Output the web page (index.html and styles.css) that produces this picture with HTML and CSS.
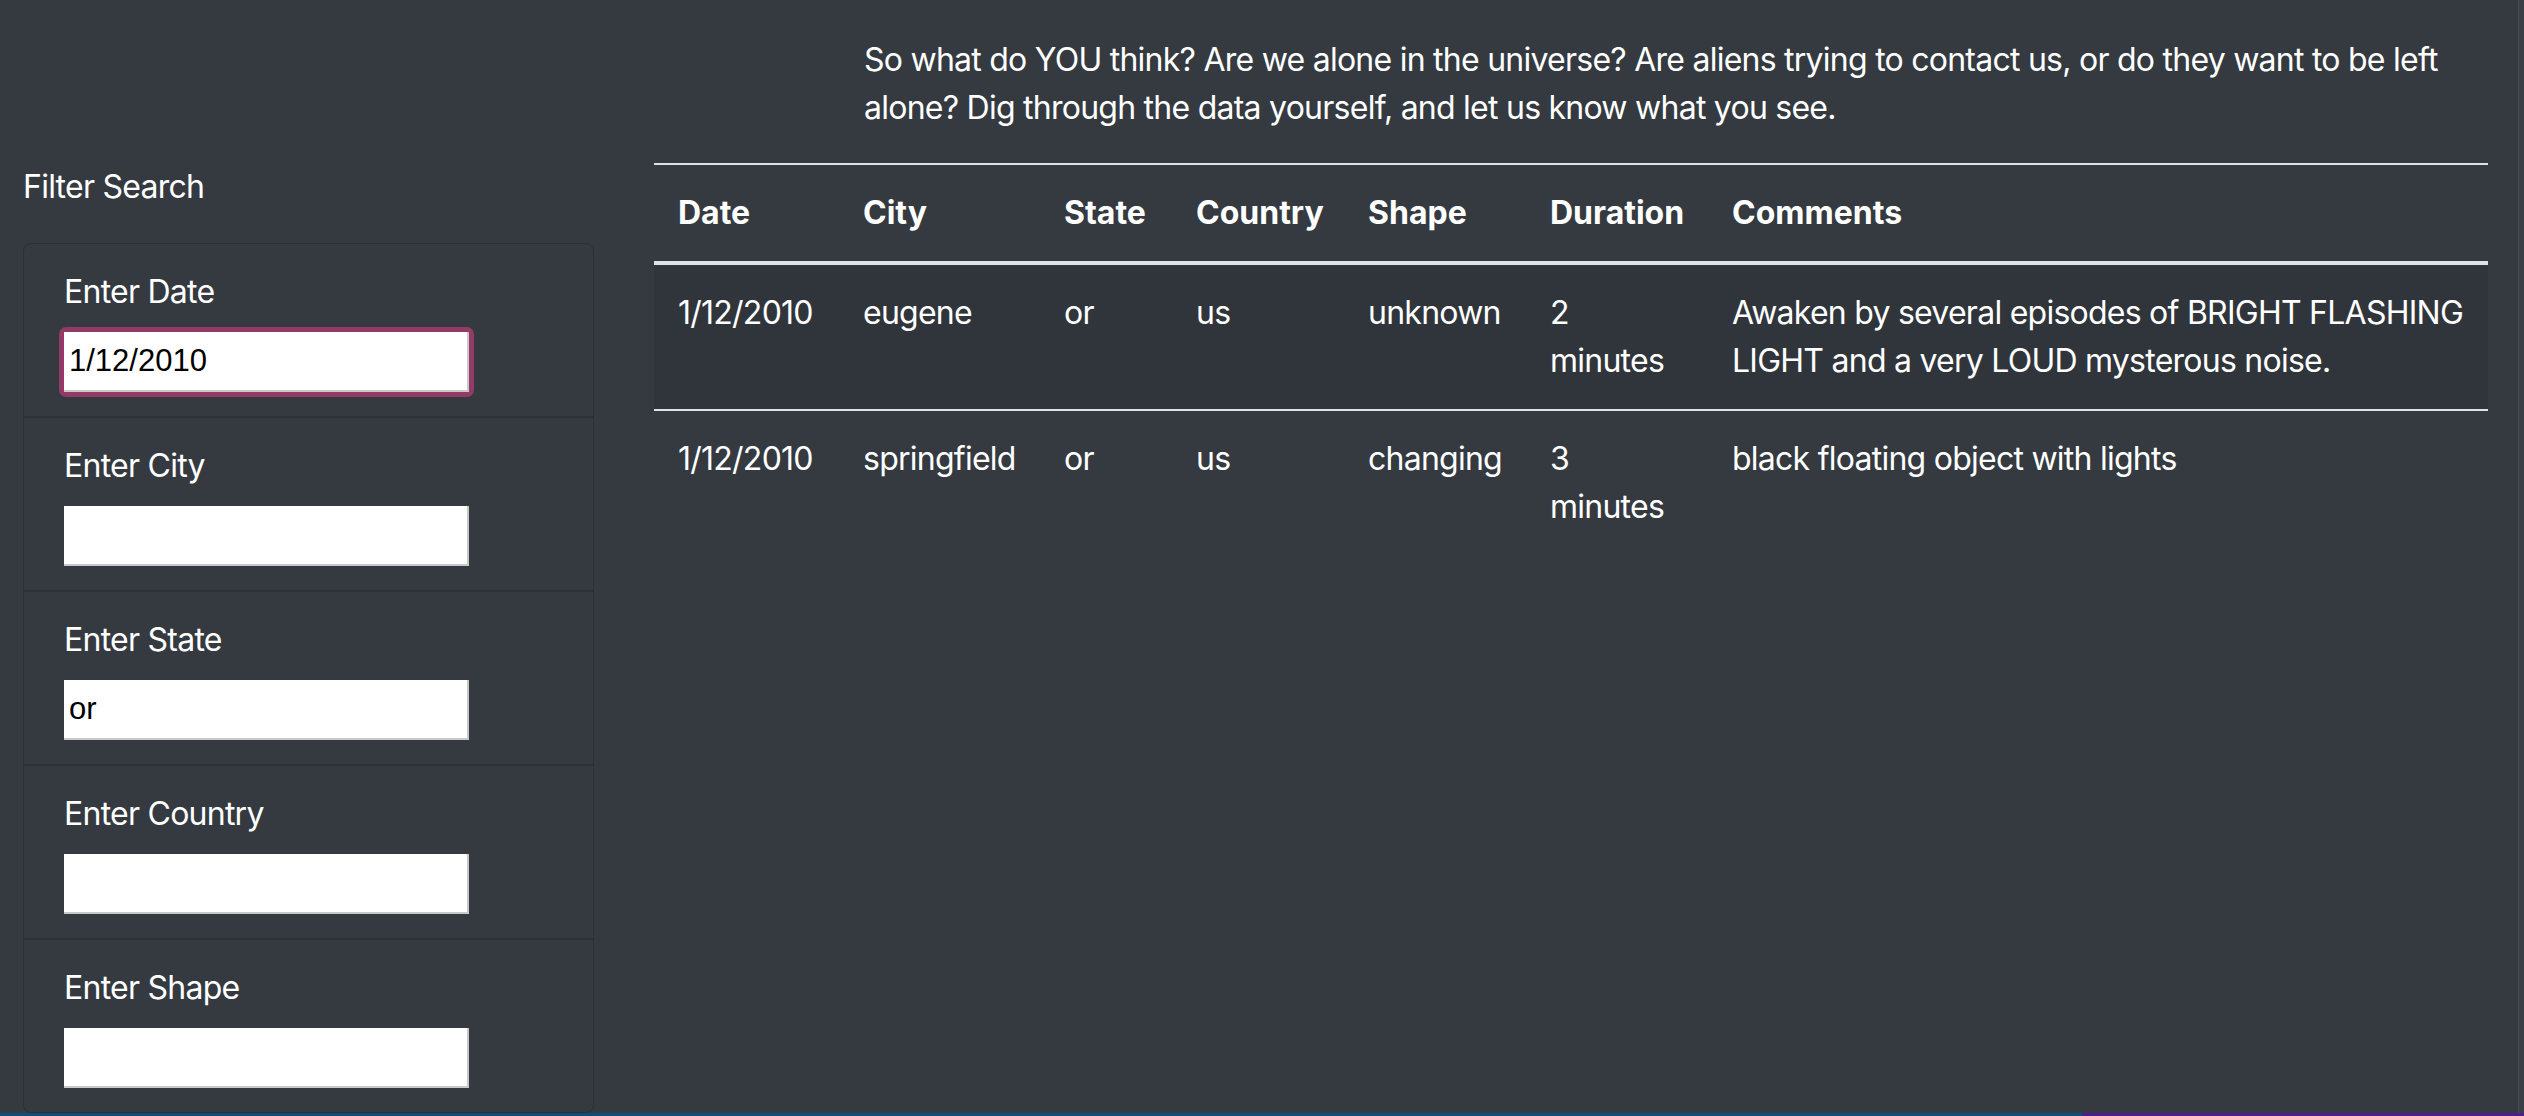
FILE: index.html
```html
<!DOCTYPE html>
<html lang="en">
<head>
<meta charset="utf-8">
<title>UFO Sightings</title>
<link rel="stylesheet" href="styles.css">
</head>
<body>
<div class="app">
  <div class="viewport">
    <div class="page">
      <aside class="sidebar">
        <div class="filter-title">Filter Search</div>
        <ul class="filters">
          <li class="filter">
            <label class="filter-label" for="datetime">Enter Date</label>
            <span class="focus-ring"><input class="filter-input" id="datetime" type="text" value="1/12/2010"></span>
          </li>
          <li class="filter">
            <label class="filter-label" for="city">Enter City</label>
            <input class="filter-input" id="city" type="text" value="">
          </li>
          <li class="filter">
            <label class="filter-label" for="state">Enter State</label>
            <input class="filter-input" id="state" type="text" value="or">
          </li>
          <li class="filter">
            <label class="filter-label" for="country">Enter Country</label>
            <input class="filter-input" id="country" type="text" value="">
          </li>
          <li class="filter">
            <label class="filter-label" for="shape">Enter Shape</label>
            <input class="filter-input" id="shape" type="text" value="">
          </li>
        </ul>
      </aside>
      <main class="content">
        <p class="intro">So what do YOU think? Are we alone in the universe? Are aliens trying to contact us, or do they want to be left alone? Dig through the data yourself, and let us know what you see.</p>
        <table class="ufo-table">
          <colgroup>
            <col class="c-date"><col class="c-city"><col class="c-state"><col class="c-country"><col class="c-shape"><col class="c-duration"><col class="c-comments">
          </colgroup>
          <thead>
            <tr><th>Date</th><th>City</th><th>State</th><th>Country</th><th>Shape</th><th>Duration</th><th>Comments</th></tr>
          </thead>
          <tbody>
            <tr class="striped"><td>1/12/2010</td><td>eugene</td><td>or</td><td>us</td><td>unknown</td><td>2 minutes</td><td>Awaken by several episodes of BRIGHT FLASHING LIGHT and a very LOUD mysterous noise.</td></tr>
            <tr><td>1/12/2010</td><td>springfield</td><td>or</td><td>us</td><td>changing</td><td>3 minutes</td><td>black floating object with lights</td></tr>
          </tbody>
        </table>
      </main>
    </div>
    <div class="scrollbar"></div>
  </div>
  <div class="statusbar"><span class="status-blue"></span><span class="status-purple"></span></div>
</div>
</body>
</html>
```

FILE: styles.css
```css
* { box-sizing: border-box; }
html, body {
  margin: 0;
  padding: 0;
  height: 100%;
  overflow: hidden;
  background: #343a40;
}
body {
  font-family: Inter, "Noto Sans", "Liberation Sans", sans-serif;
  font-size: 32px;
  line-height: 48px;
  letter-spacing: -0.75px;
  color: #ffffff;
}
.app {
  display: flex;
  flex-direction: column;
  height: 1116px;
}
.viewport {
  display: flex;
  height: 1113px;
  overflow: hidden;
}
.page {
  flex: 1;
  display: flex;
  align-items: flex-start;
}
.sidebar {
  width: 594px;
  flex: none;
  padding-left: 23px;
  padding-top: 163px;
}
.filter-title {
  margin-bottom: 32px;
}
.filters {
  list-style: none;
  margin: 0;
  padding: 0;
  border: 1px solid #2c3136;
  border-radius: 8px;
}
.filter {
  padding: 24px 40px;
  border-bottom: 2px solid #2c3136;
}
.filter:last-child { border-bottom: 0; }
.filter-label {
  display: block;
  margin-bottom: 16px;
}
.filter-input {
  display: block;
  width: 405px;
  height: 60px;
  margin: 0;
  padding: 0 5px;
  border: 0;
  border-right: 2px solid #c9c9c9;
  border-bottom: 2px solid #c9c9c9;
  border-radius: 0;
  background: #ffffff;
  color: #000000;
  font-family: "Liberation Sans", Arial, sans-serif;
  font-size: 31px;
  letter-spacing: 0;
  outline: none;
}
.focus-ring {
  display: block;
  width: 415px;
  margin: -5px;
  padding: 5px;
  border-radius: 7px;
  background: #933a67;
}
.content {
  flex: 1;
  margin-left: 60px;
  margin-right: 30px;
  padding-top: 36px;
}
.intro {
  margin: 0 0 31px 210px;
}
.ufo-table {
  width: 100%;
  border-collapse: collapse;
  table-layout: fixed;
}
.c-date { width: 185px; }
.c-city { width: 201px; }
.c-state { width: 132px; }
.c-country { width: 172px; }
.c-shape { width: 182px; }
.c-duration { width: 182px; }
.ufo-table th,
.ufo-table td {
  padding: 24px;
  text-align: left;
  vertical-align: top;
  border-top: 2px solid #dee2e6;
}
.ufo-table th {
  font-weight: 700;
  letter-spacing: 0;
  vertical-align: bottom;
  border-bottom: 4px solid #dee2e6;
}
.ufo-table .striped td {
  background: #30353b;
}
.ufo-table tbody tr:first-child td { border-top: 0; }
.scrollbar {
  width: 6px;
  flex: none;
  border-left: 1px solid #4a4f55;
  background: #3a3f45;
}
.statusbar {
  display: flex;
  height: 3px;
}
.status-blue { width: 2082px; background: #0d4f7c; }
.status-purple { flex: 1; background: #4b1e8c; }
```
